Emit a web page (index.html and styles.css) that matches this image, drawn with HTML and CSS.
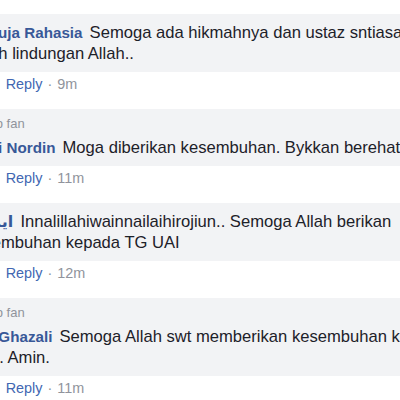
FILE: index.html
```html
<!DOCTYPE html>
<html lang="en">
  <head>
    <meta charset="UTF-8" />
    <meta name="viewport" content="width=device-width, initial-scale=1.0" />
    <title>Comments</title>
    <link rel="stylesheet" href="styles.css">
  </head>
  <body>
    <div class="thread">
      <div class="comment">
        <div class="bubble">
          <p class="line"><a href="#" class="author">Pemuja Rahasia</a> Semoga ada hikmahnya dan ustaz sntiasa</p>
          <p class="line">tabah lindungan Allah..</p>
        </div>
        <div class="actions">
          <a href="#">Like</a><span class="dot">·</span><a href="#">Reply</a><span class="dot">·</span><span class="time">9m</span>
        </div>
      </div>

      <div class="comment">
        <div class="bubble">
          <div class="badge">
            <svg width="12" height="12" viewBox="0 0 12 12">
              <circle cx="6" cy="6" r="5.5" fill="#90949c" />
              <path d="M6 2.6l1 2.1 2.3.3-1.7 1.6.4 2.3L6 7.8 4 8.9l.4-2.3L2.7 5l2.3-.3z" fill="#fff" />
            </svg>
            <span>Top fan</span>
          </div>
          <p class="line"><a href="#" class="author">Azmi Nordin</a> Moga diberikan kesembuhan. Bykkan berehat ya ustaz.</p>
        </div>
        <div class="actions">
          <a href="#">Like</a><span class="dot">·</span><a href="#">Reply</a><span class="dot">·</span><span class="time">11m</span>
        </div>
      </div>

      <div class="comment">
        <div class="bubble">
          <p class="line"><a href="#" class="author author-ar"><bdi>ايمـان</bdi></a> Innalillahiwainnailaihirojiun.. Semoga Allah berikan</p>
          <p class="line">kesembuhan kepada TG UAI</p>
        </div>
        <div class="actions">
          <a href="#">Like</a><span class="dot">·</span><a href="#">Reply</a><span class="dot">·</span><span class="time">12m</span>
        </div>
      </div>

      <div class="comment">
        <div class="bubble">
          <div class="badge">
            <svg width="12" height="12" viewBox="0 0 12 12">
              <circle cx="6" cy="6" r="5.5" fill="#90949c" />
              <path d="M6 2.6l1 2.1 2.3.3-1.7 1.6.4 2.3L6 7.8 4 8.9l.4-2.3L2.7 5l2.3-.3z" fill="#fff" />
            </svg>
            <span>Top fan</span>
          </div>
          <p class="line"><a href="#" class="author">Ayu Ghazali</a> Semoga Allah swt memberikan kesembuhan kepada</p>
          <p class="line">guru. Amin.</p>
        </div>
        <div class="actions">
          <a href="#">Like</a><span class="dot">·</span><a href="#">Reply</a><span class="dot">·</span><span class="time">11m</span>
        </div>
      </div>
    </div>
  </body>
</html>
```

FILE: styles.css
```css
* {
  margin: 0;
  padding: 0;
  box-sizing: border-box;
}

html,
body {
  overflow: hidden;
}

body {
  height: 400px;
  font-family: "Liberation Sans", "DejaVu Sans", Arial, sans-serif;
  background-color: #ffffff;
  color: #1d2129;
}

.thread {
  width: 600px;
  margin-left: -46px;
  padding-top: 14px;
  display: flex;
  flex-direction: column;
  gap: 16px;
}

.bubble {
  background-color: #f2f3f5;
  border-radius: 18px;
  padding: 8px 12px;
}

.line {
  font-size: 16.6px;
  line-height: 21px;
  white-space: nowrap;
}

.author {
  font-size: 15.2px;
  font-weight: bold;
  color: #385898;
  text-decoration: none;
  margin-right: 2.5px;
}

.author-ar {
  font-size: 16px;
}

.badge {
  display: flex;
  align-items: center;
  gap: 4px;
  font-size: 13px;
  line-height: 13px;
  color: #90949c;
  margin-bottom: 7px;
}

.actions {
  margin-top: 3px;
  padding-left: 10.5px;
  font-size: 14.4px;
  line-height: 18px;
  color: #90949c;
  white-space: nowrap;
}

.actions a {
  color: #4267b2;
  text-decoration: none;
}

.dot {
  margin: 0 5px;
}
```
